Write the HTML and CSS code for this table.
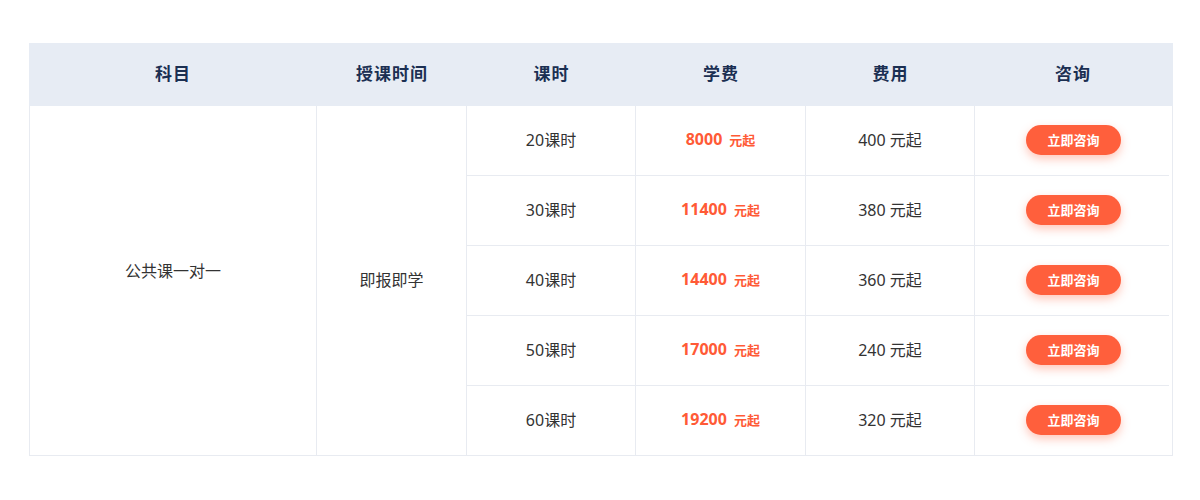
FILE: index.html
```html
<!DOCTYPE html>
<html lang="zh">
<head>
<meta charset="utf-8">
<link rel="stylesheet" href="styles.css">
</head>
<body>
<div class="table">
  <div class="head">
    <div class="hc c1">科目</div>
    <div class="hc c2">授课时间</div>
    <div class="hc c3">课时</div>
    <div class="hc c4">学费</div>
    <div class="hc c5">费用</div>
    <div class="hc c6">咨询</div>
  </div>
  <div class="body">
    <div class="cell c1 subject">公共课一对一</div>
    <div class="cell c2">即报即学</div>
    <div class="rows">
      <div class="row">
        <div class="cell c3">20课时</div>
        <div class="cell c4 price"><b>8000</b><span>元起</span></div>
        <div class="cell c5">400 元起</div>
        <div class="cell c6"><a class="btn">立即咨询</a></div>
      </div>
      <div class="row">
        <div class="cell c3">30课时</div>
        <div class="cell c4 price"><b>11400</b><span>元起</span></div>
        <div class="cell c5">380 元起</div>
        <div class="cell c6"><a class="btn">立即咨询</a></div>
      </div>
      <div class="row">
        <div class="cell c3">40课时</div>
        <div class="cell c4 price"><b>14400</b><span>元起</span></div>
        <div class="cell c5">360 元起</div>
        <div class="cell c6"><a class="btn">立即咨询</a></div>
      </div>
      <div class="row">
        <div class="cell c3">50课时</div>
        <div class="cell c4 price"><b>17000</b><span>元起</span></div>
        <div class="cell c5">240 元起</div>
        <div class="cell c6"><a class="btn">立即咨询</a></div>
      </div>
      <div class="row">
        <div class="cell c3">60课时</div>
        <div class="cell c4 price"><b>19200</b><span>元起</span></div>
        <div class="cell c5">320 元起</div>
        <div class="cell c6"><a class="btn">立即咨询</a></div>
      </div>
    </div>
  </div>
</div>
</body>
</html>
```
FILE: styles.css
```css
* { box-sizing: border-box; }
html, body { margin: 0; padding: 0; background: #fff; }
body {
  font-family: "Noto Sans", "Noto Sans CJK SC", sans-serif;
  color: #333;
  font-size: 16px;
}
.table {
  width: 1144px;
  margin: 43px 0 0 29px;
}
.head {
  display: flex;
  height: 63px;
  background: #e7ecf4;
}
.hc {
  display: flex;
  align-items: center;
  justify-content: center;
  font-size: 17px;
  font-weight: 700;
  color: #1b2f52;
  letter-spacing: 1px;
  padding-bottom: 5px;
}
.head .c1 { width: 288px; }
.head .c2 { width: 150px; }
.head .c3 { width: 169px; }
.head .c4 { width: 170px; }
.head .c5 { width: 169px; }
.head .c6 { flex: 1; padding-right: 2px; }
.body {
  display: flex;
  border: 1px solid #e8ebf1;
  border-top: none;
}
.cell {
  display: flex;
  align-items: center;
  justify-content: center;
  border-right: 1px solid #e8ebf1;
  padding-bottom: 3px;
}
.body .c1 { width: 287px; }
.body .c2 { width: 150px; }
.subject { padding-bottom: 22px; }
.rows {
  flex: 1;
  display: flex;
  flex-direction: column;
  padding-right: 3px;
}
.row {
  display: flex;
  height: 70px;
  border-bottom: 1px solid #e8ebf1;
}
.row:last-child { border-bottom: none; height: 69px; }
.row .c3 { width: 169px; }
.row .c4 { width: 170px; }
.row .c5 { width: 169px; }
.row .c6 { flex: 1; border-right: none; padding-bottom: 2px; }
.price { color: #ff5a36; }
.price b { font-size: 16px; font-weight: 700; }
.price span { font-size: 13px; font-weight: 700; margin-left: 7px; }
.btn {
  display: flex;
  align-items: center;
  justify-content: center;
  width: 95px;
  height: 30px;
  border-radius: 15px;
  background: #ff5f3c;
  color: #fff;
  font-size: 13px;
  font-weight: 700;
  box-shadow: 0 4px 10px rgba(255, 95, 60, 0.35);
  margin-left: 3px;
}
```
